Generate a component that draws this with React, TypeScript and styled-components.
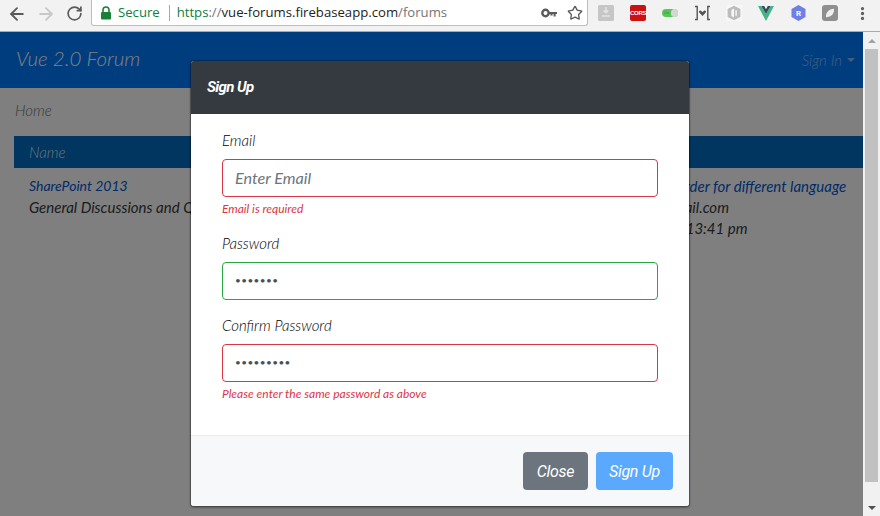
import React from "react";
import styled, { createGlobalStyle } from "styled-components";
import { ArrowLeft, ArrowRight, RotateCw, Star, MoreVertical } from "lucide-react";

const GlobalStyle = createGlobalStyle`
  html, body {
    margin: 0;
    padding: 0;
    width: 880px;
    height: 516px;
    overflow: hidden;
    background: #fff;
  }
`;

export default function App() {
  return (
    <Frame>
      <GlobalStyle />
      <Toolbar>
        <NavButtons>
          <ArrowLeft size={20} color="#5a5a5a" strokeWidth={2.2} />
          <ArrowRight size={20} color="#c8c8c8" strokeWidth={2.2} />
          <RotateCw size={17} color="#5a5a5a" strokeWidth={2.4} />
        </NavButtons>
        <Omnibox>
          <svg width="12" height="14" viewBox="0 0 12 14">
            <path d="M3 6V4a3 3 0 0 1 6 0v2" fill="none" stroke="#188038" strokeWidth="1.6" />
            <rect x="1" y="6" width="10" height="7.5" rx="1" fill="#188038" />
          </svg>
          <Secure>Secure</Secure>
          <Divider />
          <Url>
            <UrlScheme>https</UrlScheme>
            <UrlDim>://</UrlDim>
            vue-forums.firebaseapp.com
            <UrlDim>/forums</UrlDim>
          </Url>
          <OmniIcons>
            <svg width="16" height="10" viewBox="0 0 16 10">
              <circle cx="4.5" cy="5" r="3.2" fill="none" stroke="#5a5a5a" strokeWidth="2.4" />
              <path d="M8 4h8v2h-1.4v2.4h-2V6h-1v1.6H9.4V6H8z" fill="#5a5a5a" />
            </svg>
            <Star size={16} color="#5a5a5a" strokeWidth={2} />
          </OmniIcons>
        </Omnibox>
        <Extensions>
          <ExtSlot>
            <svg width="16" height="16" viewBox="0 0 16 16">
              <rect width="16" height="16" rx="1.5" fill="#c6c6c6" />
              <path d="M8 2v5M5.6 5.4 8 7.8l2.4-2.4M4 11h8" stroke="#e4e4e4" strokeWidth="1.5" fill="none" />
            </svg>
          </ExtSlot>
          <ExtSlot>
            <CorsBadge>CORS</CorsBadge>
          </ExtSlot>
          <ExtSlot>
            <ToggleTrack>
              <ToggleOn>On</ToggleOn>
              <ToggleKnob />
            </ToggleTrack>
          </ExtSlot>
          <ExtSlot>
            <svg width="17" height="16" viewBox="0 0 17 16">
              <path d="M1 1.5h2.2v13H1" fill="none" stroke="#555" strokeWidth="1.4" />
              <path d="M16 1.5h-2.2v13H16" fill="none" stroke="#555" strokeWidth="1.4" />
              <path d="M8.5 11 5.2 7.6c-1-1.2.8-2.8 2-1.6l1.3 1.1L9.8 6c1.2-1.2 3 .4 2 1.6z" fill="#555" />
            </svg>
          </ExtSlot>
          <ExtSlot>
            <svg width="16" height="16" viewBox="0 0 16 16">
              <rect width="16" height="16" fill="#f7f7f7" />
              <path d="M8 .8 14.4 4v8L8 15.2 1.6 12V4z" fill="#bdbdbd" />
              <path d="M8 3.4 5.4 5v6L8 12.6zM9.4 5.2h1.4v5.6H9.4z" fill="#f7f7f7" />
            </svg>
          </ExtSlot>
          <ExtSlot>
            <svg width="16" height="15" viewBox="0 0 16 15">
              <path d="M0 0h3.4L8 8l4.6-8H16L8 15z" fill="#41b883" />
              <path d="M3.4 0h2.8L8 3.2 9.8 0h2.8L8 8z" fill="#35495e" />
            </svg>
          </ExtSlot>
          <ExtSlot>
            <svg width="15" height="16" viewBox="0 0 15 16">
              <path d="M7.5 0 14.5 4v8l-7 4-7-4V4z" fill="#6f7fe8" />
              <text x="7.5" y="11" fontSize="8" fontFamily="Roboto, sans-serif" fontWeight="700" fill="#fff" textAnchor="middle">
                R
              </text>
            </svg>
          </ExtSlot>
          <ExtSlot>
            <svg width="16" height="16" viewBox="0 0 16 16">
              <rect width="16" height="16" rx="3" fill="#8f8f8f" />
              <path d="M4 12.2c-.4-4.4 2.4-8 8-8.4.4 4.8-2.4 8.4-8 8.4z" fill="#eee" />
            </svg>
          </ExtSlot>
          <ExtSlot>
            <MoreVertical size={17} color="#5a5a5a" strokeWidth={2.6} />
          </ExtSlot>
        </Extensions>
      </Toolbar>

      <Viewport>
        <Page>
          <Navbar>
            <Brand>Vue 2.0 Forum</Brand>
            <SignInToggle>
              Sign In
              <Caret />
            </SignInToggle>
          </Navbar>
          <Breadcrumb>Home</Breadcrumb>
          <TableHead>
            <HeadCell>Name</HeadCell>
          </TableHead>
          <TableRow>
            <NameCell>
              <ForumTitle>SharePoint 2013</ForumTitle>
              <div>General Discussions and Questions</div>
            </NameCell>
            <InfoCell>
              <ForumLink>Sample topic to reorder for different language</ForumLink>
              <div>posted by sam@gmail.com</div>
              <div>on 11/12/2017, 5:13:41 pm</div>
            </InfoCell>
          </TableRow>
          <Backdrop />
        </Page>
        <Scrollbar>
          <ScrollArrow $up />
          <ScrollThumb />
          <ScrollArrow />
        </Scrollbar>

        <ModalLayer>
          <Modal>
            <ModalHeader>Sign Up</ModalHeader>
            <ModalBody>
              <Field>
                <FieldLabel>Email</FieldLabel>
                <Input $state="invalid" placeholder="Enter Email" readOnly />
                <FieldError>Email is required</FieldError>
              </Field>
              <Field>
                <FieldLabel>Password</FieldLabel>
                <Input $state="valid" type="password" value="1234567" readOnly />
              </Field>
              <Field>
                <FieldLabel>Confirm Password</FieldLabel>
                <Input $state="invalid" type="password" value="123456789" readOnly />
                <FieldError>Please enter the same password as above</FieldError>
              </Field>
            </ModalBody>
            <ModalFooter>
              <Button $color="#6c757d" $width={65}>Close</Button>
              <Button $color="#5aa9ff" $width={77}>Sign Up</Button>
            </ModalFooter>
          </Modal>
        </ModalLayer>
      </Viewport>
    </Frame>
  );
}

const Frame = styled.div`
  display: flex;
  flex-direction: column;
  width: 880px;
  height: 516px;
  overflow: hidden;
  font-family: "Lato", "Open Sans", sans-serif;
  font-style: italic;
  font-size: 15px;
  line-height: 21px;
  color: #343a40;
`;

const Toolbar = styled.header`
  display: flex;
  align-items: flex-start;
  flex: none;
  height: 31px;
  border-bottom: 1px solid #a9a9a9;
  background: #f2f2f2;
  font-style: normal;
`;

const NavButtons = styled.div`
  display: grid;
  grid-template-columns: 29px 29px 29px;
  justify-items: center;
  align-items: center;
  width: 91px;
  height: 26px;
  padding: 1px 0 0 2px;
  box-sizing: border-box;
`;

const Omnibox = styled.div`
  display: flex;
  align-items: center;
  width: 497px;
  height: 26px;
  padding-left: 8px;
  box-sizing: border-box;
  border: 1px solid #bdbdbd;
  border-top: none;
  border-radius: 0 0 3px 3px;
  background: #fff;
  font-family: "Open Sans", sans-serif;
  font-size: 13.15px;
`;

const Secure = styled.span`
  margin-left: 6px;
  color: #0b8043;
`;

const Divider = styled.span`
  width: 1px;
  height: 16px;
  margin: 0 7px 0 9px;
  background: #a8a8a8;
`;

const Url = styled.span`
  color: #222;
  white-space: nowrap;
`;

const UrlScheme = styled.span`
  color: #0b8043;
`;

const UrlDim = styled.span`
  color: #757575;
`;

const OmniIcons = styled.div`
  display: flex;
  align-items: center;
  gap: 10px;
  margin-left: auto;
  padding-right: 4px;
`;

const Extensions = styled.div`
  display: flex;
  height: 26px;
  padding-left: 2px;
`;

const ExtSlot = styled.div`
  display: flex;
  align-items: center;
  justify-content: center;
  width: 32px;
  height: 26px;
`;

const CorsBadge = styled.span`
  width: 16px;
  height: 16px;
  border-radius: 2px;
  background: #cc1111;
  color: #fff;
  font-family: "Liberation Sans", sans-serif;
  font-size: 6px;
  font-weight: 700;
  letter-spacing: -0.3px;
  line-height: 16px;
  text-align: center;
`;

const ToggleTrack = styled.span`
  display: flex;
  align-items: center;
  width: 16px;
  height: 8px;
  border-radius: 4px;
  background: #5cc45c;
`;

const ToggleOn = styled.span`
  width: 9px;
  color: #2b8a2b;
  font-family: "Liberation Sans", sans-serif;
  font-size: 4px;
  line-height: 8px;
  text-align: center;
`;

const ToggleKnob = styled.span`
  width: 7px;
  height: 8px;
  border-radius: 4px;
  background: #d6d6d6;
`;

const Viewport = styled.main`
  position: relative;
  display: flex;
  flex: 1;
  min-height: 0;
`;

const Page = styled.div`
  position: relative;
  width: 863px;
  background: #fff;
  overflow: hidden;
`;

const Navbar = styled.nav`
  display: flex;
  align-items: center;
  justify-content: space-between;
  height: 56px;
  padding: 0 8px 0 16px;
  background: #007bff;
`;

const Brand = styled.span`
  margin-top: -3px;
  color: #fff;
  font-size: 20.5px;
  font-weight: 300;
`;

const SignInToggle = styled.span`
  display: flex;
  align-items: center;
  color: rgba(255, 255, 255, 0.5);
  font-size: 15px;
  font-weight: 300;
`;

const Caret = styled.span`
  width: 0;
  height: 0;
  margin-left: 5px;
  border-top: 4px solid rgba(255, 255, 255, 0.5);
  border-left: 4px solid transparent;
  border-right: 4px solid transparent;
`;

const Breadcrumb = styled.div`
  height: 48px;
  padding: 12px 15px 0;
  box-sizing: border-box;
  color: #6c757d;
  font-weight: 300;
`;

const TableHead = styled.div`
  display: flex;
  align-items: center;
  height: 32px;
  margin-left: 14px;
  padding-left: 15px;
  background: #006cc0;
`;

const HeadCell = styled.span`
  color: rgba(255, 255, 255, 0.85);
  font-weight: 300;
`;

const TableRow = styled.div`
  display: flex;
  margin-left: 14px;
  padding: 8px 15px 0;
`;

const NameCell = styled.div`
  width: 400px;
`;

const InfoCell = styled.div`
  white-space: nowrap;
  margin-left: 136px;
`;

const ForumLink = styled.div`
  color: #0056d0;
`;

const ForumTitle = styled(ForumLink)`
  margin-top: -1px;
  margin-bottom: 1px;
  font-size: 14px;
`;

const Backdrop = styled.div`
  position: absolute;
  inset: 0;
  background: rgba(0, 0, 0, 0.5);
`;

const Scrollbar = styled.div`
  display: flex;
  flex-direction: column;
  align-items: center;
  justify-content: space-between;
  width: 17px;
  padding-top: 7px;
  padding-bottom: 6px;
  box-sizing: border-box;
  background: #f1f1f1;
`;

const ScrollArrow = styled.span<{ $up?: boolean }>`
  width: 0;
  height: 0;
  border-left: 4px solid transparent;
  border-right: 4px solid transparent;
  ${(p) => (p.$up ? "border-bottom: 4px solid #a3a3a3;" : "border-top: 4px solid #505050;")}
`;

const ScrollThumb = styled.span`
  width: 13px;
  height: 433px;
  margin-bottom: 18px;
  background: #c1c1c1;
`;

const ModalLayer = styled.div`
  position: absolute;
  inset: 0;
  display: flex;
  justify-content: center;
  padding-top: 28px;
`;

const Modal = styled.div`
  display: flex;
  flex-direction: column;
  width: 500px;
  height: 447px;
  box-sizing: border-box;
  border: 1px solid rgba(0, 0, 0, 0.2);
  border-radius: 4px;
  background: #fff;
  background-clip: padding-box;
  box-shadow: 0 1px 2px rgba(0, 0, 0, 0.3);
  overflow: hidden;
`;

const ModalHeader = styled.div`
  flex: none;
  height: 53px;
  padding-left: 16px;
  background: #343a40;
  color: #fff;
  font-family: "Roboto", sans-serif;
  font-size: 15px;
  font-weight: 700;
  letter-spacing: -0.6px;
  line-height: 52px;
`;

const ModalBody = styled.div`
  flex: 1;
  padding: 16px 31px 0;
`;

const Field = styled.div`
  padding-bottom: 15px;
`;

const FieldLabel = styled.div`
  margin-bottom: 8px;
  color: #000;
  font-size: 15px;
  font-weight: 300;
`;

const Input = styled.input<{ $state: "valid" | "invalid" }>`
  display: block;
  width: 100%;
  height: 38px;
  box-sizing: border-box;
  padding: 0 12px 2px;
  border: 1px solid ${(p) => (p.$state === "valid" ? "#28a745" : "#dc3545")};
  border-radius: 4px;
  outline: none;
  background: #fff;
  color: #495057;
  font-family: "Lato", sans-serif;
  font-style: italic;
  font-size: ${(p) => (p.type === "password" ? "10px" : "16.2px")};
  letter-spacing: ${(p) => (p.type === "password" ? "0.4px" : "0")};

  &::placeholder {
    color: #6c757d;
    opacity: 1;
  }
`;

const FieldError = styled.div`
  margin: 3px 0 1px;
  color: #dc3545;
  font-size: 12px;
  line-height: 17px;
`;

const ModalFooter = styled.div`
  display: flex;
  justify-content: flex-end;
  gap: 8px;
  flex: none;
  height: 71px;
  box-sizing: border-box;
  padding: 16px 16px 0;
  border-top: 1px solid #e9ecef;
  background: #f7f8fa;
`;

const Button = styled.button<{ $color: string; $width: number }>`
  width: ${(p) => p.$width}px;
  height: 38px;
  padding: 0;
  border: none;
  border-radius: 4px;
  background: ${(p) => p.$color};
  color: #fff;
  font-family: "Roboto", sans-serif;
  font-style: italic;
  font-size: 16px;
  letter-spacing: -0.3px;
`;
